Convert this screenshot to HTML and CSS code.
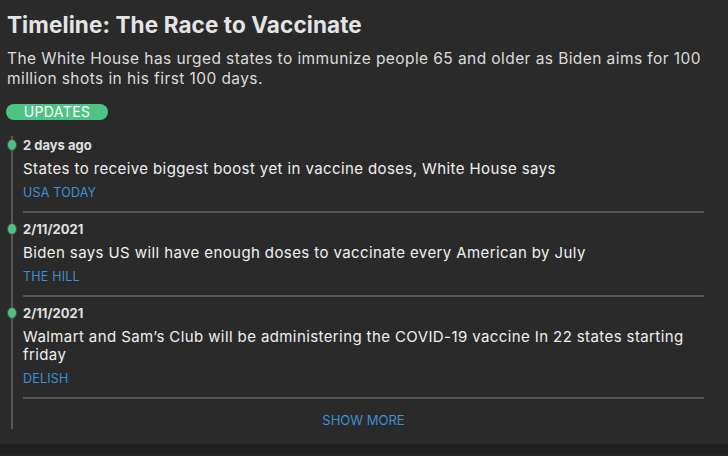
FILE: index.html
```html
<!DOCTYPE html>
<html lang="en">
<head>
<meta charset="utf-8">
<title>Timeline: The Race to Vaccinate</title>
<link rel="stylesheet" href="styles.css">
</head>
<body>
<div class="panel">
  <h1 class="title">Timeline: The Race to Vaccinate</h1>
  <p class="summary">The White House has urged states to immunize people 65 and older as Biden aims for 100 million shots in his first 100 days.</p>
  <div class="badge">UPDATES</div>
  <div class="timeline">
    <div class="item">
      <span class="dot"></span>
      <div class="date">2 days ago</div>
      <div class="headline">States to receive biggest boost yet in vaccine doses, White House says</div>
      <div class="source">USA TODAY</div>
    </div>
    <div class="item">
      <span class="dot"></span>
      <div class="date">2/11/2021</div>
      <div class="headline">Biden says US will have enough doses to vaccinate every American by July</div>
      <div class="source">THE HILL</div>
    </div>
    <div class="item">
      <span class="dot"></span>
      <div class="date">2/11/2021</div>
      <div class="headline">Walmart and Sam’s Club will be administering the COVID-19 vaccine In 22 states starting friday</div>
      <div class="source">DELISH</div>
    </div>
    <div class="more">SHOW MORE</div>
  </div>
</div>
<div class="gap"></div>
</body>
</html>
```
FILE: styles.css
```css
html, body {
  margin: 0;
  padding: 0;
  background: #252525;
}
body {
  font-family: Inter, "Noto Sans", "Liberation Sans", sans-serif;
  color: #e6e6e6;
  -webkit-font-smoothing: antialiased;
}
.panel {
  background: #2a2a2a;
  height: 444px;
  box-sizing: border-box;
  padding: 11px 24px 0 6px;
  overflow: hidden;
}
.gap {
  height: 10px;
  background: #202020;
}
.title {
  margin: 0 0 0 1px;
  font-size: 22.5px;
  line-height: 28px;
  font-weight: 700;
  letter-spacing: 0.1px;
  color: #e4e4e4;
}
.summary {
  margin: 10px -14px 0 1px;
  font-size: 15.5px;
  line-height: 20px;
  letter-spacing: 0.42px;
  color: #dcdcdc;
}
.badge {
  margin-top: 15px;
  width: 102px;
  height: 16px;
  border-radius: 8px;
  background: #4fc384;
  color: #ffffff;
  font-size: 14px;
  line-height: 16px;
  letter-spacing: 0.4px;
  text-align: center;
}
.timeline {
  margin: 16px 0 0 5px;
  border-left: 2px solid #585858;
  padding-left: 10px;
}
.item {
  position: relative;
  padding-bottom: 9px;
  border-bottom: 2px solid #555555;
  margin-bottom: 7px;
}
.dot {
  position: absolute;
  left: -16px;
  top: 3px;
  width: 8px;
  height: 10px;
  border-radius: 50%;
  background: #4cc283;
  border: 1px solid #4a4a4a;
}
.date {
  font-size: 13px;
  line-height: 18px;
  font-weight: 700;
  color: #e0e0e0;
}
.headline {
  margin-top: 6px;
  font-size: 15px;
  line-height: 18px;
  letter-spacing: 0.4px;
  color: #f0f0f0;
}
.source {
  margin-top: 6px;
  font-size: 12.5px;
  line-height: 18px;
  letter-spacing: 0.2px;
  color: #3d8fd4;
}
.more {
  margin-top: 12px;
  text-align: center;
  font-size: 13px;
  line-height: 18px;
  color: #3d8fd4;
}
```
